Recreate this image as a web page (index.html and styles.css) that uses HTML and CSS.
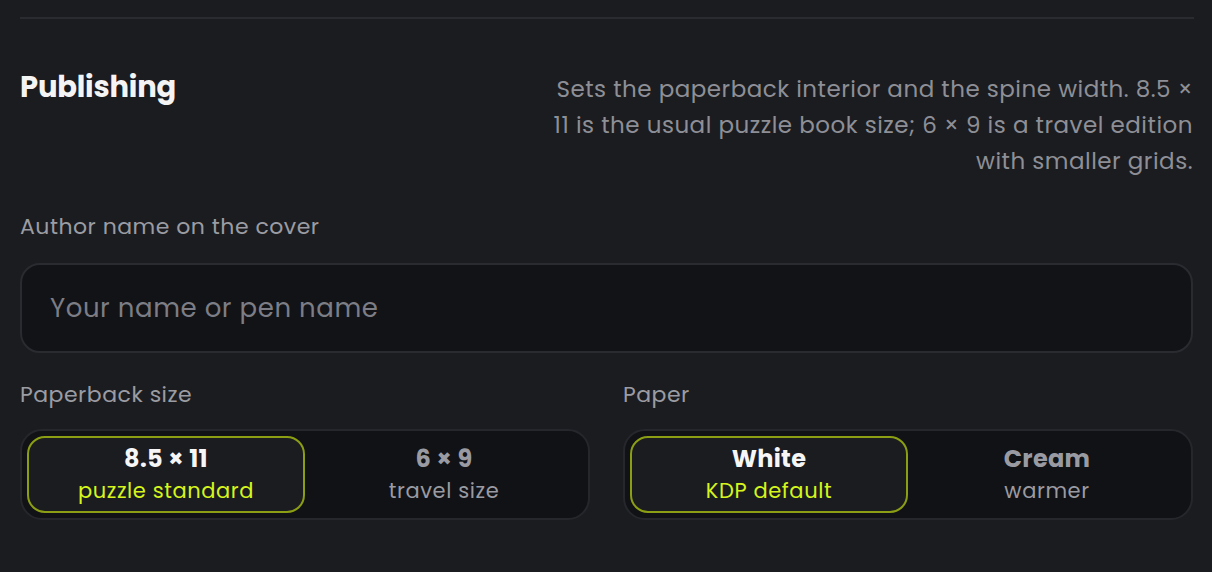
FILE: index.html
```html
<!DOCTYPE html>
<html lang="en">
<head>
<meta charset="utf-8">
<title>Publishing</title>
<link rel="stylesheet" href="styles.css">
</head>
<body>
<section class="section">
  <div class="divider"></div>
  <div class="head">
    <h2 class="title">Publishing</h2>
    <p class="desc">Sets the paperback interior and the spine width. 8.5 × 11 is the usual puzzle book size; 6 × 9 is a travel edition with smaller grids.</p>
  </div>
  <label class="label label-author" for="author">Author name on the cover</label>
  <input class="input" id="author" type="text" placeholder="Your name or pen name">
  <div class="cols">
    <div class="field">
      <div class="label">Paperback size</div>
      <div class="seg">
        <button class="opt active"><span class="opt-main">8.5 × 11</span><span class="opt-sub">puzzle standard</span></button>
        <button class="opt"><span class="opt-main">6 × 9</span><span class="opt-sub">travel size</span></button>
      </div>
    </div>
    <div class="field">
      <div class="label">Paper</div>
      <div class="seg">
        <button class="opt active"><span class="opt-main">White</span><span class="opt-sub">KDP default</span></button>
        <button class="opt"><span class="opt-main">Cream</span><span class="opt-sub">warmer</span></button>
      </div>
    </div>
  </div>
</section>
</body>
</html>
```

FILE: styles.css
```css
* { box-sizing: border-box; }
html, body {
  margin: 0;
  background: #1b1c20;
  font-family: "Poppins", "Inter", "Open Sans", sans-serif;
}
.section {
  padding: 17px 19px 0 20px;
}
.divider {
  height: 2px;
  margin-right: -1px;
  background: #2a2b30;
}
.head {
  display: flex;
  justify-content: space-between;
  align-items: flex-start;
  margin-top: 52px;
}
.title {
  margin: 0;
  font-size: 29px;
  line-height: 32px;
  font-weight: 700;
  color: #f4f4f5;
  letter-spacing: -0.2px;
}
.desc {
  margin: 0;
  width: 645px;
  text-align: right;
  font-size: 23px;
  line-height: 36px;
  letter-spacing: 0.5px;
  color: #8e8f96;
}
.label {
  display: block;
  font-size: 22px;
  line-height: 30px;
  letter-spacing: 0.5px;
  color: #9b9ca3;
}
.label-author {
  margin-top: 33px;
}
.input {
  display: block;
  width: 100%;
  height: 90px;
  margin-top: 21px;
  padding: 0 28px;
  background: #121316;
  border: 2px solid #2a2b31;
  border-radius: 20px;
  font-family: inherit;
  font-size: 26px;
  letter-spacing: 0.55px;
  color: #e8e8ea;
  outline: none;
}
.input::placeholder {
  color: #7c7d85;
}
.cols {
  display: grid;
  grid-template-columns: 1fr 1fr;
  gap: 33px;
  margin-top: 27px;
}
.seg {
  display: grid;
  grid-template-columns: 1fr 1fr;
  height: 91px;
  margin-top: 19px;
  padding: 5px;
  background: #111215;
  border: 2px solid #26272c;
  border-radius: 22px;
}
.opt {
  display: flex;
  flex-direction: column;
  align-items: center;
  justify-content: center;
  gap: 2px;
  background: transparent;
  border: 2px solid transparent;
  border-radius: 18px;
  font-family: inherit;
  cursor: pointer;
  padding: 0;
}
.opt.active {
  background: #1b1c20;
  border-color: #8c9e14;
}
.opt-main {
  font-size: 24px;
  line-height: 30px;
  font-weight: 700;
  letter-spacing: 0.3px;
  color: #9a9ba2;
}
.opt-sub {
  font-size: 21px;
  line-height: 30px;
  letter-spacing: 0.6px;
  color: #9a9ba2;
}
.opt.active .opt-main { color: #f6f6f7; }
.opt.active .opt-sub { color: #d6f51c; }
```
